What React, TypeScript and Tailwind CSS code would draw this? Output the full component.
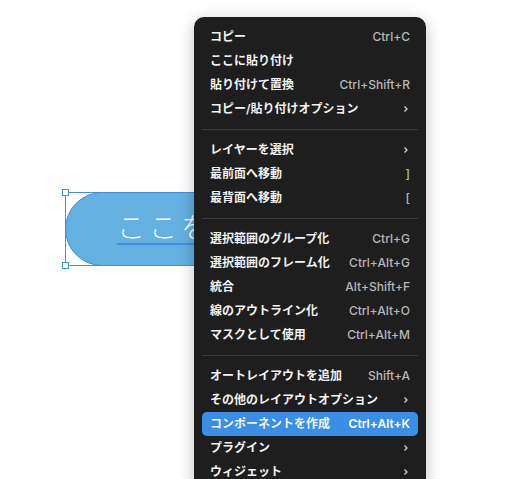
import React from "react";

type Item = { label: string; shortcut?: string; sub?: boolean; active?: boolean };

const sections: Item[][] = [
  [
    { label: "コピー", shortcut: "Ctrl+C" },
    { label: "ここに貼り付け" },
    { label: "貼り付けて置換", shortcut: "Ctrl+Shift+R" },
    { label: "コピー/貼り付けオプション", sub: true },
  ],
  [
    { label: "レイヤーを選択", sub: true },
    { label: "最前面へ移動", shortcut: "]" },
    { label: "最背面へ移動", shortcut: "[" },
  ],
  [
    { label: "選択範囲のグループ化", shortcut: "Ctrl+G" },
    { label: "選択範囲のフレーム化", shortcut: "Ctrl+Alt+G" },
    { label: "統合", shortcut: "Alt+Shift+F" },
    { label: "線のアウトライン化", shortcut: "Ctrl+Alt+O" },
    { label: "マスクとして使用", shortcut: "Ctrl+Alt+M" },
  ],
  [
    { label: "オートレイアウトを追加", shortcut: "Shift+A" },
    { label: "その他のレイアウトオプション", sub: true },
    { label: "コンポーネントを作成", shortcut: "Ctrl+Alt+K", active: true },
    { label: "プラグイン", sub: true },
    { label: "ウィジェット", sub: true },
  ],
];

function Row({ item }: { item: Item }) {
  return (
    <div
      className={`flex items-center justify-between h-6 px-2 rounded-[5px] ${
        item.active ? "bg-[#3a8ee6]" : ""
      }`}
    >
      <span className="text-[12px] font-semibold text-[#f2f2f2]">{item.label}</span>
      {item.shortcut && (
        <span className={`text-[12px] font-medium ${item.active ? "text-white font-semibold" : "text-[#b8b8b8]"}`}>
          {item.shortcut}
        </span>
      )}
      {item.sub && (
        <svg width="6" height="8" viewBox="0 0 6 8" className="mr-[1px]">
          <path d="M1.5 1.5 L4 4 L1.5 6.5" stroke="#d0d0d0" strokeWidth="1.3" fill="none" />
        </svg>
      )}
    </div>
  );
}

export default function App() {
  return (
    <div
      className="relative w-[527px] h-[479px] overflow-hidden bg-white"
      style={{ fontFamily: '"Inter", "Noto Sans CJK JP", sans-serif' }}
    >
      {/* canvas shape */}
      <div className="absolute left-[65px] top-[192px] w-[300px] h-[74px]">
        <div className="w-full h-full rounded-l-full bg-[#64b0e1] border border-[#3d8fe2] flex items-center pl-[51px]">
          <span className="whitespace-nowrap text-[28px] font-light text-white leading-none border-b-2 border-[#3d8fe2] pb-[1px] tracking-[4px]">
            ここを選択
          </span>
        </div>
        {/* selection box */}
        <div className="absolute inset-0 border border-r-0 border-[#3d8fe2] pointer-events-none" />
        <div className="absolute left-[-3px] top-[-3px] w-[7px] h-[7px] bg-white border border-[#3d8fe2]" />
        <div className="absolute left-[-3px] bottom-[-3px] w-[7px] h-[7px] bg-white border border-[#3d8fe2]" />
      </div>

      {/* context menu */}
      <div className="absolute left-[194px] top-[17px] w-[232px] h-[480px] rounded-[10px] bg-[#1e1e1e] p-2 shadow-[0_4px_16px_rgba(0,0,0,0.25)]">
        {sections.map((sec, i) => (
          <div key={i}>
            {i > 0 && <div className="h-px bg-[#3a3a3a] my-2" />}
            {sec.map((item) => (
              <Row key={item.label} item={item} />
            ))}
          </div>
        ))}
      </div>
    </div>
  );
}
